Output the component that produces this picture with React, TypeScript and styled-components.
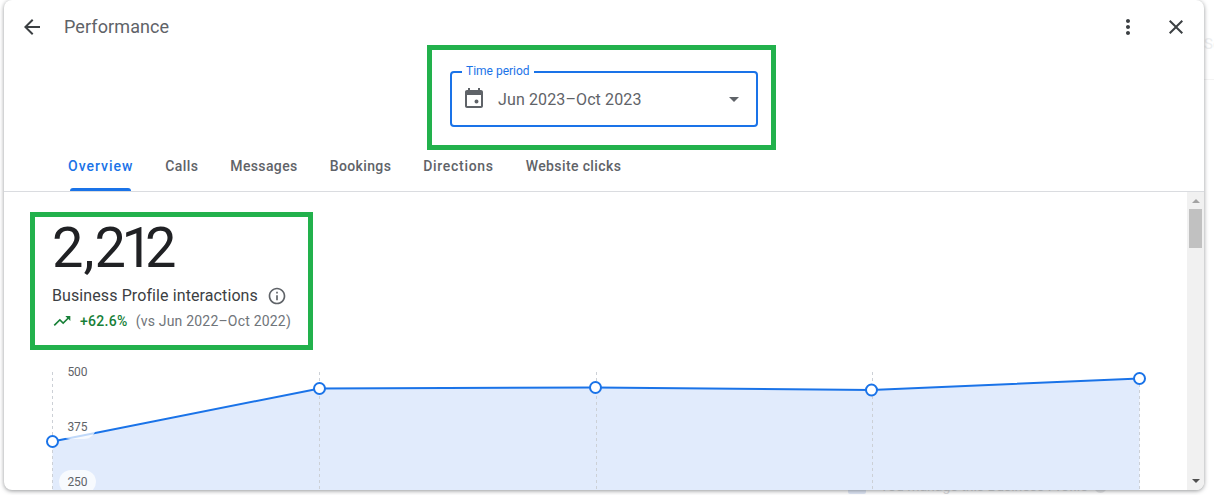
import React from "react";
import styled, { createGlobalStyle } from "styled-components";

const GlobalStyle = createGlobalStyle`
  html, body {
    margin: 0;
    padding: 0;
    background: #fff;
    font-family: Roboto, "Liberation Sans", sans-serif;
  }
`;

const Page = styled.div`
  position: relative;
  width: 1214px;
  height: 495px;
  overflow: hidden;
  background: #fff;
`;

// whatever is left of the page behind the dialog
const BehindSearch = styled.span`
  position: absolute;
  left: 1204px;
  top: 35px;
  font-size: 15px;
  color: #eceef0;
`;

const BehindLine = styled.div`
  position: absolute;
  left: 1204px;
  right: 0;
  top: 79px;
  height: 1px;
  background: #f4f4f4;
`;

const BehindBadge = styled.div`
  position: absolute;
  left: 848px;
  top: 478px;
  width: 18px;
  height: 16px;
  border-radius: 2px;
  background: #dfe7f6;
`;

const BehindText = styled.span`
  position: absolute;
  left: 880px;
  top: 478px;
  font-size: 14px;
  color: #d9dadc;
  white-space: nowrap;
`;

const BehindDot = styled.div`
  position: absolute;
  left: 1094px;
  top: 480px;
  width: 13px;
  height: 13px;
  border-radius: 50%;
  background: #e4e5e7;
`;

const Dialog = styled.div`
  position: relative;
  display: flex;
  flex-direction: column;
  margin-left: 4px;
  width: 1200px;
  height: 490px;
  background: #fff;
  border-radius: 8px;
  overflow: hidden;
  box-shadow: 0 1px 4px rgba(60, 64, 67, 0.55);
`;

const Header = styled.div`
  display: flex;
  align-items: flex-start;
  height: 45px;
  padding: 15px 16px 0 16px;
  box-sizing: border-box;
`;

const IconButton = styled.span<{ $gap?: number; $muted?: boolean }>`
  display: flex;
  width: 24px;
  height: 24px;
  margin-left: ${(p) => p.$gap ?? 0}px;
  color: ${(p) => (p.$muted ? "#5f6368" : "#3c4043")};
`;

const Title = styled.h1`
  margin: 0 0 0 20px;
  font-size: 18px;
  font-weight: 400;
  line-height: 24px;
  letter-spacing: 0.1px;
  color: #5f6368;
`;

const HeaderActions = styled.div`
  display: flex;
  margin-left: auto;
`;

const PeriodSection = styled.div`
  padding-left: 423px;
`;

const HighlightBox = styled.div<{ $w: number; $h: number }>`
  box-sizing: border-box;
  width: ${(p) => p.$w}px;
  height: ${(p) => p.$h}px;
  border: 5px solid #22b14c;
`;

const PeriodBox = styled(HighlightBox)`
  padding: 21px 18px 0 18px;
`;

const Select = styled.div`
  position: relative;
  display: flex;
  align-items: center;
  box-sizing: border-box;
  width: 308px;
  height: 56px;
  padding: 0 10px;
  border: 2px solid #1a73e8;
  border-radius: 4px;
`;

const SelectLabel = styled.span`
  position: absolute;
  left: 10px;
  top: -9px;
  padding: 0 4px;
  background: #fff;
  font-size: 12px;
  line-height: 14px;
  color: #1a73e8;
`;

const SelectValue = styled.span`
  margin-left: 12px;
  font-size: 16px;
  letter-spacing: 0.12px;
  color: #5f6368;
`;

const Caret = styled.span`
  display: flex;
  margin-left: auto;
  color: #5f6368;
`;

const Tabs = styled.div`
  display: flex;
  gap: 32px;
  height: 42px;
  padding-left: 64px;
  box-sizing: border-box;
  border-bottom: 1px solid #dadce0;
`;

const Tab = styled.div<{ $active?: boolean; $spacing: number }>`
  position: relative;
  padding-top: 8px;
  font-size: 14px;
  font-weight: 500;
  line-height: 16px;
  letter-spacing: ${(p) => p.$spacing}px;
  white-space: nowrap;
  color: ${(p) => (p.$active ? "#1a73e8" : "#5f6368")};

  ${(p) =>
    p.$active &&
    `&::after {
      content: "";
      position: absolute;
      left: 2px;
      right: 2px;
      bottom: 0;
      height: 3px;
      border-radius: 3px 3px 0 0;
      background: #1a73e8;
    }`}
`;

const Body = styled.div`
  display: flex;
  flex: 1;
  min-height: 0;
`;

const Content = styled.div`
  flex: 1;
  min-width: 0;
  padding-top: 20px;
`;

const StatsBox = styled(HighlightBox)`
  margin-left: 26px;
  padding-left: 17px;
`;

const BigNumber = styled.div`
  font-size: 56px;
  line-height: 62px;
  color: #202124;
`;

// the reference's digits are proportional, Roboto's are not
const Kern = styled.span<{ $by: number }>`
  letter-spacing: ${(p) => p.$by}px;
`;

const StatLabel = styled.div`
  display: flex;
  align-items: center;
  margin-top: 5px;
  font-size: 16px;
  line-height: 24px;
  letter-spacing: 0.1px;
  color: #3c4043;
`;

const InfoIcon = styled.span`
  display: flex;
  margin-left: 9px;
  color: #5f6368;
`;

const Delta = styled.div`
  display: flex;
  align-items: center;
  margin-top: 3px;
  line-height: 18px;
`;

const DeltaIcon = styled.span`
  display: flex;
  margin-right: 8px;
  color: #188038;
`;

const DeltaValue = styled.span`
  font-size: 14px;
  font-weight: 500;
  letter-spacing: 0.3px;
  color: #188038;
`;

const DeltaNote = styled.span`
  margin-left: 8px;
  font-size: 14px;
  letter-spacing: 0.2px;
  color: #70757a;
`;

const ChartWrap = styled.div`
  position: relative;
  margin-top: 10px;
  height: 130px;
`;

const ChartSvg = styled.svg`
  display: block;
`;

const AxisLabel = styled.span<{ $top: number }>`
  position: absolute;
  left: 55px;
  top: ${(p) => p.$top}px;
  width: 37px;
  height: 24px;
  border-radius: 12px;
  background: rgba(255, 255, 255, 0.72);
  font-size: 12px;
  line-height: 24px;
  text-align: center;
  color: #5f6368;
`;

const Scrollbar = styled.div`
  display: flex;
  flex-direction: column;
  align-items: center;
  width: 17px;
  background: #f1f1f1;
`;

const ArrowUp = styled.div`
  margin-top: 7px;
  border-left: 4px solid transparent;
  border-right: 4px solid transparent;
  border-bottom: 4px solid #a3a3a3;
`;

const Thumb = styled.div`
  margin-top: 6px;
  width: 13px;
  height: 39px;
  background: #c1c1c1;
`;

const ArrowDown = styled.div`
  margin-top: auto;
  margin-bottom: 7px;
  border-left: 4px solid transparent;
  border-right: 4px solid transparent;
  border-top: 4px solid #505050;
`;

const Icon = ({ d, size = 24 }: { d: string; size?: number }) => (
  <svg width={size} height={size} viewBox="0 0 24 24" fill="currentColor">
    <path d={d} />
  </svg>
);

const icons = {
  back: "M20 11H7.83l5.59-5.59L12 4l-8 8 8 8 1.41-1.41L7.83 13H20v-2z",
  more: "M12 8c1.1 0 2-.9 2-2s-.9-2-2-2-2 .9-2 2 .9 2 2 2zm0 2c-1.1 0-2 .9-2 2s.9 2 2 2 2-.9 2-2-.9-2-2-2zm0 6c-1.1 0-2 .9-2 2s.9 2 2 2 2-.9 2-2-.9-2-2-2z",
  close:
    "M19 6.41L17.59 5 12 10.59 6.41 5 5 6.41 10.59 12 5 17.59 6.41 19 12 13.41 17.59 19 19 17.59 13.41 12z",
  calendar:
    "M16 1v2H8V1H6v2H5c-1.11 0-1.99.9-1.99 2L3 19c0 1.1.89 2 2 2h14c1.1 0 2-.9 2-2V5c0-1.1-.9-2-2-2h-1V1h-2zm3 18H5V8h14v11zM14.5 12.5a2 2 0 1 0 0 4 2 2 0 0 0 0-4z",
  caret: "M7 10l5 5 5-5z",
  info: "M11 7h2v2h-2zm0 4h2v6h-2zm1-9C6.48 2 2 6.48 2 12s4.48 10 10 10 10-4.48 10-10S17.52 2 12 2zm0 18c-4.41 0-8-3.59-8-8s3.59-8 8-8 8 3.59 8 8-3.59 8-8 8z",
  trend:
    "M16 6l2.29 2.29-4.88 4.88-4-4L2 16.59 3.41 18l6-6 4 4 6.3-6.29L22 12V6z",
};

const tabs = [
  { label: "Overview", spacing: 0.98 },
  { label: "Calls", spacing: 0.38 },
  { label: "Messages", spacing: 0.38 },
  { label: "Bookings", spacing: 0.38 },
  { label: "Directions", spacing: 0.7 },
  { label: "Website clicks", spacing: 0.38 },
];

// x, y of each month in the chart's own coordinates
const points: [number, number][] = [
  [48.5, 81.5],
  [315.5, 28.5],
  [591.5, 27.5],
  [867.5, 30],
  [1135.5, 18.5],
];
const gridX = [48, 315, 592, 868, 1135];

const linePath = points.map(([x, y]) => `${x},${y}`).join(" ");
const areaPath = `48.5,130 ${linePath} 1135.5,130`;

const axisLabels = [
  { text: "500", top: 0 },
  { text: "375", top: 55 },
  { text: "250", top: 110 },
];

function Chart() {
  return (
    <ChartWrap>
      <ChartSvg width={1183} height={130}>
        <polygon points={areaPath} fill="#e1ebfc" />
        {gridX.map((x) => (
          <line
            key={x}
            x1={x + 0.5}
            x2={x + 0.5}
            y1={12}
            y2={130}
            stroke="#ccd0d6"
            strokeDasharray="3 3"
          />
        ))}
        <polyline points={linePath} fill="none" stroke="#1a73e8" strokeWidth={2} />
        {points.map(([x, y]) => (
          <circle key={x} cx={x} cy={y} r={5.5} fill="#fff" stroke="#1a73e8" strokeWidth={2} />
        ))}
      </ChartSvg>
      {axisLabels.map((l) => (
        <AxisLabel key={l.text} $top={l.top}>
          {l.text}
        </AxisLabel>
      ))}
    </ChartWrap>
  );
}

export default function App() {
  return (
    <Page>
      <GlobalStyle />
      <BehindSearch>Se</BehindSearch>
      <BehindLine />
      <BehindBadge />
      <BehindText>You manage this Business Profile</BehindText>
      <BehindDot />
      <Dialog>
        <Header>
          <IconButton>
            <Icon d={icons.back} />
          </IconButton>
          <Title>Performance</Title>
          <HeaderActions>
            <IconButton>
              <Icon d={icons.more} />
            </IconButton>
            <IconButton $gap={24}>
              <Icon d={icons.close} />
            </IconButton>
          </HeaderActions>
        </Header>
        <PeriodSection>
          <PeriodBox $w={349} $h={105}>
            <Select>
              <SelectLabel>Time period</SelectLabel>
              <IconButton $muted>
                <Icon d={icons.calendar} />
              </IconButton>
              <SelectValue>Jun 2023–Oct 2023</SelectValue>
              <Caret>
                <Icon d={icons.caret} />
              </Caret>
            </Select>
          </PeriodBox>
        </PeriodSection>
        <Tabs>
          {tabs.map((t, i) => (
            <Tab key={t.label} $active={i === 0} $spacing={t.spacing}>
              {t.label}
            </Tab>
          ))}
        </Tabs>
        <Body>
          <Content>
            <StatsBox $w={283} $h={138}>
              <BigNumber>
                2,<Kern $by={-4.4}>2</Kern>
                <Kern $by={-8}>1</Kern>2
              </BigNumber>
              <StatLabel>
                Business Profile interactions
                <InfoIcon>
                  <Icon d={icons.info} size={20} />
                </InfoIcon>
              </StatLabel>
              <Delta>
                <DeltaIcon>
                  <Icon d={icons.trend} size={20} />
                </DeltaIcon>
                <DeltaValue>+62.6%</DeltaValue>
                <DeltaNote>(vs Jun 2022–Oct 2022)</DeltaNote>
              </Delta>
            </StatsBox>
            <Chart />
          </Content>
          <Scrollbar>
            <ArrowUp />
            <Thumb />
            <ArrowDown />
          </Scrollbar>
        </Body>
      </Dialog>
    </Page>
  );
}
